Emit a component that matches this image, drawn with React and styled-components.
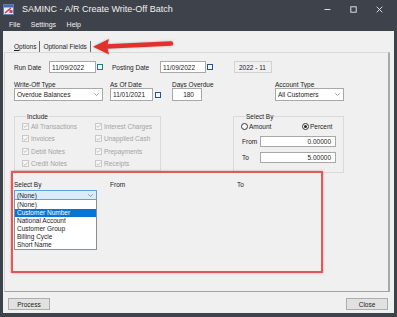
import styled, { createGlobalStyle } from "styled-components";

const GlobalStyle = createGlobalStyle`
  html, body {
    margin: 0;
    padding: 0;
    background: #3e424a;
  }
  body {
    width: 397px;
    height: 317px;
    overflow: hidden;
    font-family: "Liberation Sans", Arial, sans-serif;
    color: #1b1b1b;
  }
  * { box-sizing: border-box; }
`;

const Window = styled.div`
  position: relative;
  width: 397px;
  height: 317px;
  display: flex;
  flex-direction: column;
  background: #3e424a;
`;

const TitleBar = styled.div`
  height: 18px;
  display: flex;
  align-items: center;
  padding-left: 3px;
  color: #f1f1f1;
  font-size: 9px;
`;

const AppIcon = styled.svg`
  width: 11px;
  height: 11px;
  margin-right: 8px;
  flex-shrink: 0;
`;

const Controls = styled.div`
  margin-left: auto;
  display: flex;
  align-items: center;
  gap: 19px;
  padding-right: 14px;
  svg { width: 7px; height: 7px; }
`;

const MenuBar = styled.div`
  height: 13px;
  display: flex;
  align-items: center;
  gap: 10.5px;
  padding-left: 9px;
  color: #f1f1f1;
  font-size: 7px;
`;

const Body = styled.div`
  flex: 1;
  margin: 0 3px 4px 3px;
  background: #f0f0f0;
  display: flex;
  flex-direction: column;
  font-size: 6.5px;
`;

const TabStrip = styled.div`
  height: 21px;
  display: flex;
  align-items: flex-end;
  padding-left: 8px;
`;

const Tab = styled.div`
  height: 11px;
  line-height: 11px;
  padding: 0 3px;
  border-right: 1px solid #6a6a6a;
  u { text-decoration: underline; }
`;

const Panel = styled.div`
  flex: 1;
  margin: 0 4px 0 1px;
  border-top: 1px solid #d9d9d9;
  border-left: 1px solid #d4d4d4;
  border-right: 2px solid #a8a8a8;
  border-bottom: 1px solid #a2a2a2;
  padding: 8px 0 0 9px;
  display: flex;
  flex-direction: column;
`;

const Row = styled.div`
  display: flex;
  align-items: ${(p) => p.$align || "center"};
  height: ${(p) => p.$h}px;
  margin-top: ${(p) => p.$mt || 0}px;
  margin-left: ${(p) => p.$ml || 0}px;
`;

const Label = styled.span`
  display: inline-block;
  width: ${(p) => (p.$w ? `${p.$w}px` : "auto")};
  margin-left: ${(p) => p.$ml || 0}px;
  flex-shrink: 0;
  line-height: 7px;
  white-space: nowrap;
  color: ${(p) => (p.$off ? "#a3a3a3" : "inherit")};
`;

const Field = styled.div`
  width: ${(p) => p.$w}px;
  height: ${(p) => p.$h || 12}px;
  margin-left: ${(p) => p.$ml || 0}px;
  flex-shrink: 0;
  border: 1px solid ${(p) => (p.$focus ? "#6b9fd3" : p.$flat ? "#d2d2d2" : "#a8a8a8")};
  background: ${(p) => (p.$focus ? "#dcebfa" : p.$flat ? "#f0f0f0" : "#fff")};
  display: flex;
  align-items: center;
  justify-content: ${(p) => (p.$right ? "flex-end" : p.$combo ? "space-between" : "flex-start")};
  padding: 0 ${(p) => (p.$right ? p.$pr || 4 : 3)}px 0 ${(p) => (p.$flat ? 4 : 2)}px;
  white-space: nowrap;
`;

const Chevron = () => (
  <svg width="5" height="3" viewBox="0 0 5 3">
    <path d="M0.3 0.3 L2.5 2.5 L4.7 0.3" fill="none" stroke="#7a7a7a" strokeWidth="0.7" />
  </svg>
);

const Cal = styled.span`
  width: 6px;
  height: 6px;
  margin-left: ${(p) => p.$ml || 1}px;
  flex-shrink: 0;
  border: 1.4px solid ${(p) => p.$c || "#24538e"};
  background: #f4f8fb;
`;

const Col = styled.div`
  display: flex;
  flex-direction: column;
  width: ${(p) => (p.$w ? `${p.$w}px` : "auto")};
  margin-left: ${(p) => p.$ml || 0}px;
  flex-shrink: 0;
`;

const Group = styled.fieldset`
  margin: 0 0 0 ${(p) => p.$ml || 0}px;
  width: ${(p) => p.$w}px;
  height: ${(p) => p.$h}px;
  flex-shrink: 0;
  padding: 0 0 0 7px;
  border: 1px solid #dadada;
  min-width: 0;
  legend {
    padding: 0 1px;
    margin-left: 4px;
    line-height: 7px;
    font-size: 6.5px;
  }
`;

const CheckGrid = styled.div`
  display: grid;
  grid-template-columns: 73px 1fr;
  grid-auto-rows: 12.5px;
  align-items: center;
`;

const CheckItem = styled.div`
  display: flex;
  align-items: center;
  gap: 2px;
`;

const Box = styled.span`
  width: 7px;
  height: 7px;
  border: 1px solid #c9c9c9;
  background: #f6f6f6;
  display: flex;
  align-items: center;
  justify-content: center;
  svg { width: 5px; height: 4px; }
`;

const Radio = styled.span`
  width: 7px;
  height: 7px;
  border-radius: 50%;
  border: 1px solid #333;
  background: #fff;
  display: flex;
  align-items: center;
  justify-content: center;
  &::after {
    content: "";
    width: 3px;
    height: 3px;
    border-radius: 50%;
    background: ${(p) => (p.$on ? "#222" : "transparent")};
  }
`;

const RadioItem = styled.div`
  width: ${(p) => (p.$w ? `${p.$w}px` : "auto")};
  display: flex;
  align-items: center;
  gap: 1px;
`;

const Highlight = styled.div`
  width: 312px;
  height: 102px;
  margin-left: -3px;
  border: 2px solid #e05a5a;
  box-shadow: 0 0 2px rgba(214, 70, 70, 0.55);
  padding: 8px 0 0 1px;
  display: flex;
  flex-direction: column;
`;

const ListBox = styled.div`
  width: 83px;
  height: 50px;
  border: 1px solid #8a8f96;
  border-top: none;
  background: #fff;
  overflow: hidden;
  padding-top: 1px;
`;

const ListItem = styled.div`
  height: 8px;
  line-height: 8px;
  padding-left: 2px;
  white-space: nowrap;
  background: ${(p) => (p.$sel ? "#0a74d4" : "transparent")};
  color: ${(p) => (p.$sel ? "#fff" : "inherit")};
`;

const Footer = styled.div`
  height: 21px;
  display: flex;
  justify-content: space-between;
  padding: 6px 6px 0 5px;
`;

const Button = styled.div`
  width: 42px;
  height: 12px;
  border: 1px solid #adadad;
  background: #e1e1e1;
  display: flex;
  align-items: center;
  justify-content: center;
`;

const Arrow = styled.svg`
  position: absolute;
  left: 88px;
  top: 34px;
  width: 90px;
  height: 24px;
  filter: drop-shadow(0 0.5px 1px rgba(0, 0, 0, 0.25));
`;

const Tick = () => (
  <svg viewBox="0 0 5 4">
    <path d="M0.5 2 L2 3.3 L4.6 0.5" fill="none" stroke="#b4b4b4" strokeWidth="0.8" />
  </svg>
);

const includeLeft = ["All Transactions", "Invoices", "Debit Notes", "Credit Notes"];
const includeRight = ["Interest Charges", "Unapplied Cash", "Prepayments", "Receipts"];
const selectOptions = [
  "(None)",
  "Customer Number",
  "National Account",
  "Customer Group",
  "Billing Cycle",
  "Short Name",
];

export default function App() {
  return (
    <Window>
      <GlobalStyle />
      <TitleBar>
        <AppIcon viewBox="0 0 11 11">
          <rect x="0.5" y="0.5" width="10" height="10" fill="#e9eef6" stroke="#5f7fae" />
          <rect x="1" y="1" width="9" height="2.5" fill="#3d6fb8" />
          <path d="M2 9 L8 4" stroke="#d8343a" strokeWidth="1.6" />
          <rect x="6.5" y="6" width="3" height="3" fill="#c23a8a" />
        </AppIcon>
        SAMINC - A/R Create Write-Off Batch
        <Controls>
          <svg viewBox="0 0 7 7">
            <path d="M0.5 3.5 H6.5" stroke="#eee" strokeWidth="0.9" />
          </svg>
          <svg viewBox="0 0 7 7">
            <rect x="0.8" y="0.8" width="5.4" height="5.4" fill="none" stroke="#eee" strokeWidth="0.9" />
          </svg>
          <svg viewBox="0 0 7 7">
            <path d="M0.7 0.7 L6.3 6.3 M6.3 0.7 L0.7 6.3" stroke="#eee" strokeWidth="0.9" />
          </svg>
        </Controls>
      </TitleBar>
      <MenuBar>
        <span>File</span>
        <span>Settings</span>
        <span>Help</span>
      </MenuBar>
      <Body>
        <TabStrip>
          <Tab>
            <u>O</u>ptions
          </Tab>
          <Tab>Optional Fields</Tab>
        </TabStrip>
        <Panel>
          <Row $h={12}>
            <Label $w={35}>Run Date</Label>
            <Field $w={47}>11/09/2022</Field>
            <Cal $c="#2d7a7a" />
            <Label $w={48} $ml={9}>Posting Date</Label>
            <Field $w={46}>11/09/2022</Field>
            <Cal />
            <Field $w={38} $ml={21} $flat>2022 - 11</Field>
          </Row>
          <Row $h={20} $mt={8} $align="flex-start">
            <Col $w={89}>
              <Label>Write-Off Type</Label>
              <Field $w={89} $h={13} $combo>
                Overdue Balances
                <Chevron />
              </Field>
            </Col>
            <Col $w={51} $ml={7}>
              <Label>As Of Date</Label>
              <Row $h={13}>
                <Field $w={43} $h={13}>11/01/2021</Field>
                <Cal $ml={2} />
              </Row>
            </Col>
            <Col $w={44} $ml={11}>
              <Label>Days Overdue</Label>
              <Field $w={30} $h={13} $right $pr={7}>180</Field>
            </Col>
            <Col $w={69} $ml={59}>
              <Label>Account Type</Label>
              <Field $w={69} $h={13} $combo>
                All Customers
                <Chevron />
              </Field>
            </Col>
          </Row>
          <Row $h={58} $mt={12} $align="flex-start">
            <Group $w={147} $h={58}>
              <legend>Include</legend>
              <CheckGrid>
                {includeLeft.map((l, i) => [
                  <CheckItem key={l}>
                    <Box><Tick /></Box>
                    <Label $off>{l}</Label>
                  </CheckItem>,
                  <CheckItem key={includeRight[i]}>
                    <Box><Tick /></Box>
                    <Label $off>{includeRight[i]}</Label>
                  </CheckItem>,
                ])}
              </CheckGrid>
            </Group>
            <Group $w={111} $h={60} $ml={72}>
              <legend>Select By</legend>
              <Row $h={12}>
                <RadioItem $w={61}>
                  <Radio />
                  <Label>Amount</Label>
                </RadioItem>
                <RadioItem>
                  <Radio $on />
                  <Label>Percent</Label>
                </RadioItem>
              </Row>
              <Row $h={11} $mt={4}>
                <Label $w={18} $ml={1}>From</Label>
                <Field $w={76} $h={11} $right>0.00000</Field>
              </Row>
              <Row $h={11} $mt={5}>
                <Label $w={18} $ml={1}>To</Label>
                <Field $w={76} $h={11} $right>5.00000</Field>
              </Row>
            </Group>
          </Row>
          <Highlight>
            <Row $h={7}>
              <Label $w={96}>Select By</Label>
              <Label $w={127}>From</Label>
              <Label>To</Label>
            </Row>
            <Field $w={83} $h={10} $focus $combo style={{ marginTop: 2 }}>
              (None)
              <Chevron />
            </Field>
            <ListBox>
              {selectOptions.map((o, i) => (
                <ListItem key={o} $sel={i === 1}>
                  {o}
                </ListItem>
              ))}
            </ListBox>
          </Highlight>
        </Panel>
        <Footer>
          <Button>Process</Button>
          <Button>Close</Button>
        </Footer>
      </Body>
      <Arrow viewBox="0 0 90 24">
        <path d="M18 12.5 L83 9.5" stroke="#e3302c" strokeWidth="4.5" strokeLinecap="round" />
        <path d="M5 12.8 L21 5 L19 12.5 L21 20.5 Z" fill="#e3302c" />
      </Arrow>
    </Window>
  );
}
